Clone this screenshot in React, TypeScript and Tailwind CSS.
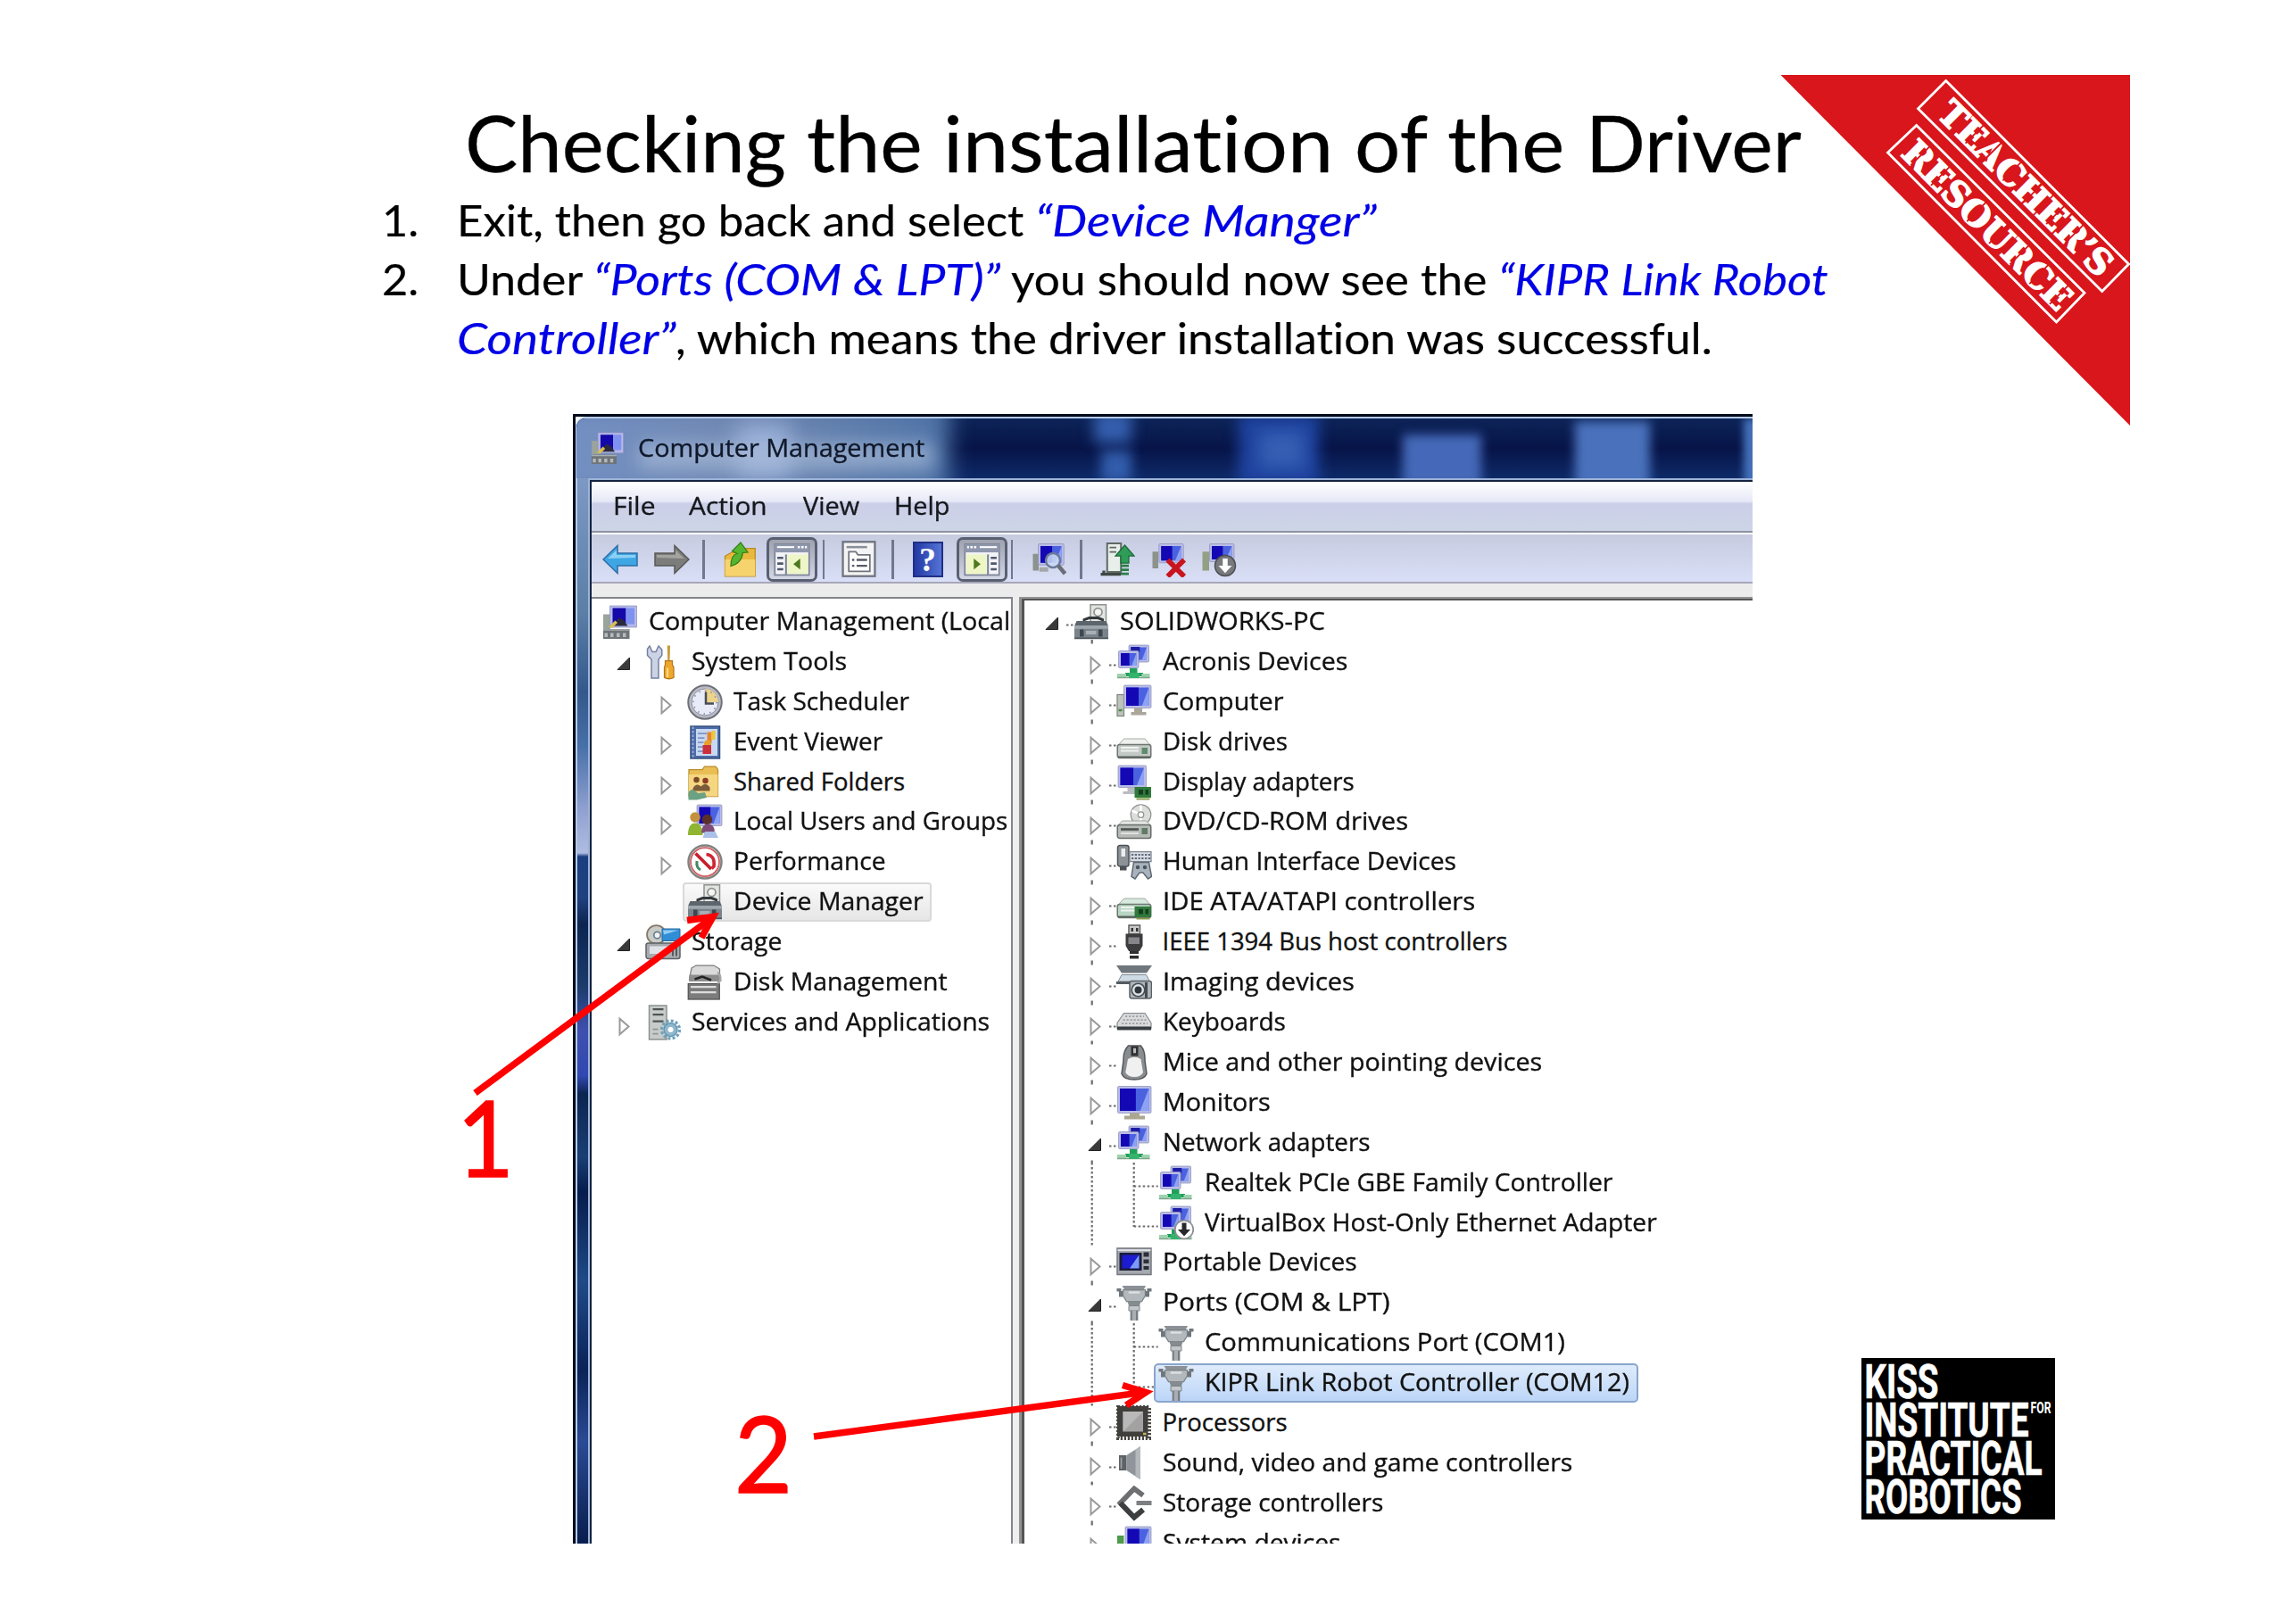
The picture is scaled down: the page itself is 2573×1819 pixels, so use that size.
import React, { useLayoutEffect, useRef, useState } from "react";

/* Text squeezed or stretched horizontally so that it fills an exact advance width. */
function Fit({ w, children, className = "" }: { w: number; children: string; className?: string }) {
  const ref = useRef<HTMLSpanElement>(null);
  const [k, setK] = useState(1);
  useLayoutEffect(() => {
    if (ref.current) setK(w / ref.current.offsetWidth);
  }, [w, children]);
  return (
    <span className="inline-block shrink-0" style={{ width: w }}>
      <span
        ref={ref}
        className={"inline-block origin-left whitespace-pre [font-variant-ligatures:none] " + className}
        style={{ transform: `scaleX(${k})` }}
      >
        {children}
      </span>
    </span>
  );
}

function Mon({ x, y, w, h, dark = "#1408b4" }: { x: number; y: number; w: number; h: number; dark?: string }) {
  return (
    <g>
      <rect x={x} y={y} width={w} height={h} rx={0.5} fill="#b9bce6" stroke="#8f93b8" strokeWidth={0.3} />
      <rect x={x + 1} y={y + 1} width={w - 2} height={h - 2} fill="#4b62e0" />
      <path d={`M${x + 1} ${y + 1}h${(w - 2) * 0.55}v${h - 2}h-${(w - 2) * 0.55}z`} fill={dark} />
      <path d={`M${x + w - 1} ${y + 1}v${h - 2}h-${(w - 2) * 0.3}z`} fill="#8ea2f4" />
    </g>
  );
}

function Port() {
  return (
    <g>
      <path d="M2.6 0.4h10.6l-1 2H3.8z" fill="#8b9196" />
      <path d="M3 2.2h10v2.6l-1.6 2.6H4.6L3 4.8z" fill="#b3b8bc" stroke="#7d8488" strokeWidth=".5" />
      <path d="M0.2 1.6h2v1.2h.8v2.6H1.2V3H.2zM15.8 1.6h-2v1.2H13v2.6h1.8V3h1z" fill="#70777c" />
      <path d="M5 7.4h6l-.6 2H5.6z" fill="#858c90" />
      <path d="M5.6 9.4h4.8v2.2H5.6z" fill="#c3c7ca" stroke="#7d8488" strokeWidth=".4" />
      <path d="M6.3 11.6h3.4V16H6.3z" fill="#a9aeb2" />
      <path d="M6.3 11.6h.8V16h-.8zM8.8 11.6h.9V16h-.9z" fill="#767d82" />
      <path d="M5.5 3.4h5" stroke="#dfe2e4" strokeWidth=".9" />
    </g>
  );
}

function Net() {
  return (
    <g>
      <Mon x={5.6} y={0.4} w={9} h={7.6} dark="#3d4dc0" />
      <rect x={6.5} y={1.2} width={4} height={2.4} fill="#1d1ca6" />
      <Mon x={1} y={3} w={9} h={7.6} />
      <path d="M6 10.8h3.4v2H12v1.6H4v-1.6h2z" fill="#21a05a" />
      <path d="M0.4 13.2h4v1.8h-4zM11.4 13.2h3.6v1.8h-3.6z" fill="#9ed3ae" />
      <path d="M.4 15h14.6" stroke="#7fa58c" strokeWidth=".6" />
      <rect x={5.6} y={12.8} width={4.6} height={2.4} fill="#35b36c" />
    </g>
  );
}

function Mgmt() {
  return (
    <g>
      <path d="M0.4 4.6h3.2v6.6H.4z" fill="#9aa39c" />
      <path d="M3.4 0.8h12v9.6h-12z" fill="#b4b8ea" stroke="#8f94bc" strokeWidth=".3" />
      <path d="M4.6 1.8h6v7.2h-6z" fill="#1408a8" />
      <path d="M10.6 1.8h3.8v7.2h-3.8z" fill="#7f92f0" />
      <path d="M4 9.8l3.4-3.6 2 .9 2 2.7z" fill="#2b2a3c" />
      <path d="M2.8 10.2l3-2.8 1 1-2.4 2.4z" fill="#d9bd55" />
      <path d="M0.4 11.2h11.8v4.4H.4z" fill="#6e7478" />
      <path d="M1 13h1.4v1.8H1zM3.6 13H5v1.8H3.6zM6.4 13h1.4v1.8H6.4zM9.2 13h1.4v1.8H9.2z" fill="#b5babd" />
      <path d="M.4 11.6h11.8" stroke="#a9aeb2" strokeWidth=".6" />
    </g>
  );
}

function DevMgr() {
  return (
    <g>
      <rect x={7.6} y={0.3} width={7} height={9} fill="#e2e5e2" stroke="#8d938e" strokeWidth=".6" />
      <circle cx={11} cy={3.6} r={1.8} fill="#f4f5f4" stroke="#8d938e" strokeWidth=".7" />
      <path d="M4.800 8V7L7 6.200h4l2 .8V8" fill="none" stroke="#33383c" strokeWidth="1.200" />
      <path d="M1.4 7.6h13.2l1 2.2H.4z" fill="#5d656c" />
      <path d="M.4 9.6h15.2v6H.4z" fill="#7a838b" />
      <path d="M.4 9.6h15.2v1.5H.4z" fill="#9ea6ad" />
      <path d="M2.8 11.4h1.8v3.2H2.8zM11.2 11.4H13v3.2h-1.8z" fill="#3f474e" />
      <path d="M5.6 12h4.6v1.6H5.6z" fill="#a8b0b6" />
      <path d="M.4 15.3h15.2" stroke="#4c5359" strokeWidth=".7" />
    </g>
  );
}

function Drive({ green = false }: { green?: boolean }) {
  return (
    <g>
      <path d="M3.4 6.4h9.4l2.6 3H.8z" fill={green ? "#d6ebdd" : "#eef0ee"} stroke="#a5aaa6" strokeWidth=".4" />
      <rect x={0.5} y={9} width={15} height={6} rx={1} fill={green ? "#b7d6c2" : "#c3c9c5"} stroke="#6f7672" strokeWidth=".6" />
      <path d="M2 10.4h8M2 11.8h8" stroke="#eff2f0" strokeWidth=".8" />
      <rect x={11.4} y={10.4} width={2.6} height={2.8} fill="#5f8a6c" />
      <path d="M.8 14.6h14.4" stroke="#5c625e" strokeWidth=".8" />
    </g>
  );
}

function Chip() {
  return (
    <g>
      <rect x={8.2} y={10} width={7.4} height={4.8} fill="#2f7a3c" />
      <path d="M10 11.2h2v2.2h-2zM13 11.2h1.4v2.2H13z" fill="#163d1e" />
      <path d="M9 15.4h6" stroke="#8a9a4c" strokeWidth=".8" />
    </g>
  );
}

const icons: Record<string, React.ReactNode> = {
  mgmt: <Mgmt />,
  devmgr: <DevMgr />,
  net: <Net />,
  port: <Port />,
  disk: <Drive />,
  tools: (
    <g>
      <path d="M2 .8L3.2 3.4h1.6L6 .8l1.5 1.6v2.6L6 6.8V15.2H2.8V6.8L1 5V2.2z" fill="#ccd3e4" stroke="#7680a0" strokeWidth=".6" />
      <path d="M9.9 .6h1.3l-.2 6.8h-.9z" fill="#c79b3a" />
      <path d="M9 7.4h3.2v1.8l.6 1.2V15q-2.1 1-4.2 0v-4.6l.4-1.2z" fill="#efa62c" stroke="#b4761a" strokeWidth=".5" />
      <path d="M10 10.6v4.2" stroke="#ffd987" strokeWidth=".9" />
    </g>
  ),
  clock: (
    <g>
      <circle cx={8} cy={8} r={7.5} fill="#b9bcc6" stroke="#6e7078" strokeWidth=".8" />
      <circle cx={8} cy={8} r={6} fill="#e8ecf8" stroke="#8b8e9b" strokeWidth=".4" />
      <path d="M8 8V2A6 6 0 0 1 14 8z" fill="#ecd48c" />
      <path d="M8.4 3.4v5.2H12" fill="none" stroke="#4a4c54" strokeWidth="1" />
      <circle cx={8} cy={8} r={5.2} fill="none" stroke="#8c93b0" strokeWidth=".7" strokeDasharray=".6 2.1" />
    </g>
  ),
  event: (
    <g>
      <rect x={1.6} y={0.8} width={13} height={14.4} fill="#4d6ca8" stroke="#36507e" strokeWidth=".6" />
      <rect x={4} y={2} width={9.6} height={12} fill="#c9d8f2" />
      <path d="M2.6 1v14" stroke="#9fb2d8" strokeWidth=".7" strokeDasharray="1 .8" />
      <path d="M4.8 4h4M4.8 6h3M4.8 8h2.6M4.8 10h2.6M4.8 12h3" stroke="#7f95c4" strokeWidth=".7" />
      <rect x={9} y={3.4} width={2} height={5} fill="#e8842c" />
      <rect x={11} y={2.8} width={1.6} height={4} fill="#e8c833" />
      <circle cx={9.2} cy={8.6} r={1.6} fill="#e8a02c" />
      <rect x={7} y={9.2} width={3.8} height={4} fill="#cc2f3c" />
    </g>
  ),
  shared: (
    <g>
      <path d="M.8 2.2h6l1-1.4h5l1 1.4v12H.8z" fill="#e9bf55" stroke="#b98c2c" strokeWidth=".5" />
      <path d="M.8 4.4h13v9.8H.8z" fill="#f5d681" />
      <circle cx={4.2} cy={6.800} r={1.3} fill="#7a4a26" />
      <circle cx={8.2} cy={7.200} r={1.3} fill="#8c3b26" />
      <path d="M2.6 10.6q1.6-2.8 3.6-.8 2-2.4 4 .4v1.6H2.6z" fill="#7a5c3a" />
      <path d="M.6 13.4q0-2.2 2-2.2l2.4 1.6 3-.4.8 2.4-4.4 1H.6z" fill="#6ba283" />
    </g>
  ),
  users: (
    <g>
      <Mon x={4.4} y={0.4} w={11.2} h={9.4} />
      <circle cx={3.6} cy={6} r={2.3} fill="#c4913c" />
      <path d="M.4 14q0-5.4 3.2-5.4T7 14z" fill="#8fb533" />
      <circle cx={9} cy={7} r={2.3} fill="#5b2f2a" />
      <path d="M6.4 13q0-4 3-4t3 4z" fill="#7e4c78" />
      <path d="M8 12.4h4.6l1.4 2.8H7z" fill="#a9c0e8" />
    </g>
  ),
  perf: (
    <g>
      <circle cx={8} cy={8} r={7.4} fill="#f1f1ee" stroke="#7f8480" strokeWidth="1" />
      <circle cx={8} cy={8} r={6.4} fill="#fff" stroke="#d05b60" strokeWidth=".7" />
      <path d="M3.8 4.2l7 7" stroke="#c71f2c" strokeWidth="1.5" />
      <path d="M8.6 4.6q4 .4 3.4 5.4l-1 1" fill="none" stroke="#cf2835" strokeWidth="1.5" />
      <path d="M4.4 7.6q-.4 3 1.6 4" fill="none" stroke="#3f8a62" strokeWidth="1.2" />
    </g>
  ),
  storage: (
    <g>
      <circle cx={5} cy={4.6} r={4.2} fill="#c8ccc6" stroke="#85796b" strokeWidth=".7" />
      <circle cx={5.4} cy={4.8} r={1.5} fill="#f3f3f3" stroke="#6b7f95" strokeWidth=".7" />
      <path d="M7.6 2h8v5.4h-8z" fill="#2f8ed6" stroke="#276a9f" strokeWidth=".4" />
      <path d="M8 2.6h7l-6.6 2z" fill="#90cbf2" />
      <rect x={0.4} y={8.4} width={15.2} height={7} rx={1} fill="#a7abb0" stroke="#5c6166" strokeWidth=".6" />
      <path d="M2 9.8h8v3.4H2z" fill="#dfe2e6" />
      <path d="M12.4 9.6v4.6M14 9.6v4.6" stroke="#4b4f54" strokeWidth=".7" />
    </g>
  ),
  diskmgmt: (
    <g>
      <path d="M2 1.6L4 .4h8l2.6 1.6v4.6H1z" fill="#dadada" stroke="#7b7b7b" strokeWidth=".5" />
      <path d="M1 4.6h14l.4 3H.8z" fill="#8d8d8d" />
      <path d="M3.4 6.6l3.4-1.2 4 1.6" fill="none" stroke="#222" strokeWidth="1" />
      <rect x={0.5} y={8.6} width={14} height={7} fill="#7c7c7c" stroke="#525252" strokeWidth=".5" />
      <path d="M1.6 10h11.4M1.6 12.4h11.4" stroke="#dcdcdc" strokeWidth=".9" />
      <path d="M13.6 3.6a3 3 0 0 1 0 5" fill="none" stroke="#a7a7a7" strokeWidth=".9" />
    </g>
  ),
  services: (
    <g>
      <rect x={1.8} y={0.4} width={7.8} height={15.2} fill="#c7ccca" stroke="#8c928f" strokeWidth=".6" />
      <path d="M3.4 2h4.8M3.4 4.4h4.8M3.4 7.4h4.8" stroke="#4f5553" strokeWidth=".9" />
      <path d="M3.4 11h2.4M3.4 13h2.4" stroke="#8e9491" strokeWidth=".7" />
      <circle cx={11.4} cy={11.2} r={4} fill="none" stroke="#6fa0bb" strokeWidth="1.3" strokeDasharray="1.2 .89" />
      <circle cx={11.4} cy={11.2} r={3} fill="#8fb7cd" stroke="#5d90ac" strokeWidth=".5" />
      <circle cx={11.4} cy={11.2} r={1.2} fill="#fff" />
    </g>
  ),
  computer: (
    <g>
      <rect x={0.4} y={4.6} width={3} height={9.6} fill="#bcc4bc" stroke="#7e867e" strokeWidth=".5" />
      <path d="M1 11.6h1.6" stroke="#4c8a4c" strokeWidth="1" />
      <Mon x={3.4} y={0.4} w={12.2} h={10.2} />
      <path d="M8 10.6h3.6v1.8h1.8v1.4H6.6v-1.4H8z" fill="#aaa69c" />
    </g>
  ),
  display: (
    <g>
      <Mon x={0.8} y={0.4} w={12.6} h={9.8} />
      <path d="M5 10.4h4v1.6h2v1.2H3V12h2z" fill="#b9bcc0" />
      <Chip />
    </g>
  ),
  dvd: (
    <g>
      <circle cx={11} cy={4.8} r={4.5} fill="#dcdedb" stroke="#8f928e" strokeWidth=".5" />
      <path d="M11 .6v3M11 6v3M7 3l3 1.4" stroke="#fff" strokeWidth="1" />
      <circle cx={11} cy={4.8} r={1.3} fill="#fff" stroke="#8f928e" strokeWidth=".5" />
      <path d="M2.6 7.6h10.8l2 2H.8z" fill="#e4e6e4" stroke="#a0a3a0" strokeWidth=".4" />
      <rect x={0.5} y={9.4} width={15} height={6} rx={1} fill="#b5bab6" stroke="#686d69" strokeWidth=".6" />
      <path d="M2 11.4h8" stroke="#4c504d" strokeWidth="1" />
      <path d="M2 13.2h8" stroke="#e6e8e6" strokeWidth=".7" />
      <rect x={11.4} y={10.8} width={2.6} height={2.8} fill="#5f7a66" />
    </g>
  ),
  hid: (
    <g>
      <rect x={0.6} y={0.6} width={5} height={9.4} rx={1} fill="#8c9296" stroke="#4d5256" strokeWidth=".6" />
      <rect x={2.2} y={2} width={1.8} height={3.6} fill="#eceeef" />
      <path d="M1.6 10h3v1.8h-3z" fill="#4d5256" />
      <path d="M6 3.4h9.6v4.4H6z" fill="#d7dbe2" stroke="#7d8590" strokeWidth=".5" />
      <path d="M6.8 4.8h8.4M6.8 6.4h8.4" stroke="#5f6a7c" strokeWidth=".8" strokeDasharray=".9 .6" />
      <path d="M7.8 8.2h6.8l1.2 6.4-1.6 1-2.2-2.8h-1.6l-2 2.8L6.8 14.6z" fill="#a9b3bd" stroke="#5f6972" strokeWidth=".6" />
      <circle cx={9.6} cy={10.4} r={0.9} fill="#4c5660" />
      <circle cx={12.8} cy={10.4} r={0.9} fill="#4c5660" />
    </g>
  ),
  ide: (
    <g>
      <Drive green />
      <Chip />
    </g>
  ),
  ieee: (
    <g>
      <path d="M5.6 .4h5v4h-5z" fill="#c9c9c9" stroke="#5f5f5f" strokeWidth=".6" />
      <path d="M6.6 1.6h1v1.6h-1zM8.8 1.6h1v1.6h-1z" fill="#333" />
      <path d="M4.2 4.2h7.6v5.4l-1.4 2.4H5.6L4.2 9.6z" fill="#3c3c3e" />
      <path d="M5.4 5.8h5v3h-5z" fill="#86868a" />
      <path d="M6 12h4v1.2H6zM6 14h4v1.4H6z" fill="#2d2d2e" />
    </g>
  ),
  imaging: (
    <g>
      <path d="M0 .4h16l-2.4 3.4H2.4z" fill="#6f777d" />
      <path d="M2.4 4.6h11l1.6 3H.8z" fill="#cfdbe4" stroke="#7f8990" strokeWidth=".4" />
      <path d="M0 8.2h10" stroke="#555c62" strokeWidth="1.2" />
      <rect x={6} y={7.4} width={9.8} height={7.8} rx={1} fill="#adb5bb" stroke="#596066" strokeWidth=".6" />
      <circle cx={9.8} cy={11.4} r={2.9} fill="#dfe3e6" stroke="#454c52" strokeWidth=".6" />
      <circle cx={9.8} cy={11.4} r={1.6} fill="#30373d" />
      <path d="M13.4 8v7" stroke="#454c52" strokeWidth="1.2" />
    </g>
  ),
  keyboard: (
    <g>
      <path d="M3.4 3.8h9.4l2.8 4.4v2.4H.4V8.2z" fill="#d9dbdc" stroke="#8c9092" strokeWidth=".5" />
      <path d="M4 5.2h8.4M3 6.8h10.4M2.4 8.4h11.6" stroke="#9da1a4" strokeWidth=".7" strokeDasharray=".9 .7" />
      <path d="M.4 9.8h15.2v1.6H.4z" fill="#3b3e40" />
    </g>
  ),
  mouse: (
    <g>
      <path d="M5.4 .4h5.600q2 2.4 1.8 6.6l.8 6q-1 2.6-5.600 2.6t-5.600-2.6l.8-6Q3 2.800 5.4 .4z" fill="#8a8d90" stroke="#55585b" strokeWidth=".6" />
      <path d="M5.200 6.400Q8.200 4.600 11 6.400l1 6q-1 2-3.900 2t-4-2z" fill="#f0f0f0" />
      <path d="M6.600 .6h3.200v4.400H6.600z" fill="#2f3133" />
      <path d="M7.600 1.500h1.200v2.200H7.600z" fill="#b9bbbd" />
    </g>
  ),
  monitor: (
    <g>
      <Mon x={0.6} y={0.6} w={15} h={12} />
      <path d="M6 12.600h4.400v1.200h2.400v1.600H3.600v-1.600H6z" fill="#aaa690" />
    </g>
  ),
  netdown: (
    <g>
      <Net />
      <circle cx={11.600} cy={10.800} r={4.100} fill="#fff" stroke="#8d8f92" strokeWidth=".7" />
      <path d="M10.600 7.800h2v3h1.800l-2.800 3-2.800-3h1.800z" fill="#26282a" />
    </g>
  ),
  portable: (
    <g>
      <rect x={0.400} y={1.600} width={15.200} height={11.800} fill="#a5a9b0" stroke="#75797f" strokeWidth=".6" />
      <rect x={1.400} y={3.600} width={10} height={8} fill="#1a1d3c" />
      <rect x={2.600} y={4.600} width={7.600} height={6} fill="#1c1cd0" />
      <path d="M10.200 4.600v6H6z" fill="#7d9cf8" />
      <path d="M12.200 3.400h2.400v2h-2.400zM12.200 6.600h2.400v1.800h-2.400zM12.200 9.600h2.400v1.600h-2.400z" fill="#2c2f36" />
      <path d="M.6 2.400h14.800" stroke="#e3e5e8" strokeWidth=".7" />
    </g>
  ),
  cpu: (
    <g>
      <rect x={0.800} y={0.800} width={14} height={14} fill="none" stroke="#4a4844" strokeWidth="1.600" strokeDasharray=".9 .7" />
      <rect x={0.400} y={0.400} width={13.800} height={13.600} fill="#403f3c" />
      <rect x={3} y={2.800} width={9} height={9} fill="#a2a2a2" />
      <path d="M3 2.800h9L3 11.800z" fill="#b9b9b9" />
      <path d="M12 12.800h1.400" stroke="#c6b45a" strokeWidth="1" />
    </g>
  ),
  sound: (
    <g>
      <path d="M1.200 4.400h3.400v6.800H1.200z" fill="#5d6266" />
      <path d="M4.600 4.400L10.800 .4v14.800L4.600 11.200z" fill="#8f959a" />
      <path d="M8.600 2v12l2.200 1.200V.4z" fill="#b3b8bb" />
      <path d="M2.200 5.400v5" stroke="#9aa0a5" strokeWidth=".7" />
    </g>
  ),
  storctl: (
    <g>
      <path d="M12 4.400L8 1.400 1.800 7.800 8 14.200 12 10.800" fill="none" stroke="#6d6f70" strokeWidth="2.300" />
      <path d="M1.800 7.800L8 14.200 12 10.800" fill="none" stroke="#3c3e3f" strokeWidth="2.300" />
      <path d="M9 7.800h6.800" stroke="#7d7f80" strokeWidth="2" />
    </g>
  ),
  system: (
    <g>
      <rect x={0.400} y={4.400} width={3} height={9.600} fill="#4f9a4c" />
      <Mon x={4} y={0.400} w={11.600} h={10} />
    </g>
  ),
};

function Icon({ name, className = "size-[40px]" }: { name: string; className?: string }) {
  return (
    <svg viewBox="0 0 16 16" className={"shrink-0 " + className}>
      {icons[name]}
    </svg>
  );
}

type Arrow = "open" | "closed" | "none";
type Item = { t: string; w: number; l: number; a: Arrow; i: string; sel?: "gray" | "blue"; last?: boolean };

function Expander({ a }: { a: Arrow }) {
  return (
    <svg viewBox="0 0 32 45" className="h-[45px] w-[32px] shrink-0">
      {a === "open" && <path d="M14.500 18V31.500H1z" fill="#3a3a3a" stroke="#222" strokeWidth="1" />}
      {a === "closed" && <path d="M3.500 17.800v17.500l10-8.700z" fill="#fff" stroke="#9a9a9a" strokeWidth="2" />}
    </svg>
  );
}

function Connectors({ item }: { item: Item }) {
  const dash = { stroke: "#6b6b6b", strokeWidth: 2.2, strokeDasharray: "2.5 2.5", fill: "none" };
  return (
    <svg viewBox="0 0 160 45" className="absolute left-0 top-0 h-[45px] w-[160px]">
      {item.l === 0 && <path d="M47 25.500h8M75.700 42v3" {...dash} />}
      {item.l === 1 && <path d="M95 26.500h8M75.700 0v3M75.700 42.500v2.500" {...dash} />}
      {item.l === 2 && <path d="M75.700 0v45M122.700 26.500h27" {...dash} />}
      {item.l === 2 && <path d={item.last ? "M122.700 0v27" : "M122.700 0v45"} {...dash} />}
    </svg>
  );
}

function Row({ item, base, dots = false }: { item: Item; base: number; dots?: boolean }) {
  const iconX = base + item.l * 47.5;
  const slot = iconX >= 32;
  return (
    <div className="relative flex h-[44.91px] items-center" style={{ paddingLeft: slot ? iconX - 32 : iconX }}>
      {dots && <Connectors item={item} />}
      {slot && (
        <span className="relative flex">
          <Expander a={item.a} />
        </span>
      )}
      <span className="relative flex items-center">
        {item.sel === "gray" && (
          <span className="absolute -left-[5px] top-[-2px] h-[44px] w-[279px] rounded-[4px] border-2 border-[#d9d9d9] bg-linear-to-b from-[#fafafa] to-[#e6e6e6]" />
        )}
        {item.sel === "blue" && (
          <span className="absolute -left-[5px] top-[-2px] h-[44px] w-[543px] rounded-[5px] border-[2.5px] border-[#8aa5cc] bg-linear-to-b from-[#dfebfb] to-[#bcd6f8]" />
        )}
        <Icon name={item.i} className="relative size-[40px]" />
        <span className="relative -top-[1px] ml-[12px] font-['Open_Sans',sans-serif] text-[27.5px] leading-[40px] text-[#111] [-webkit-text-stroke:0.35px]">
          <Fit w={item.w - 2}>{item.t}</Fit>
        </span>
      </span>
    </div>
  );
}

const left: Item[] = [
  { t: "Computer Management (Local", w: 407, l: 0, a: "none", i: "mgmt" },
  { t: "System Tools", w: 176, l: 1, a: "open", i: "tools" },
  { t: "Task Scheduler", w: 199, l: 2, a: "closed", i: "clock" },
  { t: "Event Viewer", w: 169, l: 2, a: "closed", i: "event" },
  { t: "Shared Folders", w: 194, l: 2, a: "closed", i: "shared" },
  { t: "Local Users and Groups", w: 309, l: 2, a: "closed", i: "users" },
  { t: "Performance", w: 172, l: 2, a: "closed", i: "perf" },
  { t: "Device Manager", w: 215, l: 2, a: "none", i: "devmgr", sel: "gray" },
  { t: "Storage", w: 103, l: 1, a: "open", i: "storage" },
  { t: "Disk Management", w: 242, l: 2, a: "none", i: "diskmgmt" },
  { t: "Services and Applications", w: 336, l: 1, a: "closed", i: "services" },
];

const right: Item[] = [
  { t: "SOLIDWORKS-PC", w: 232, l: 0, a: "open", i: "devmgr" },
  { t: "Acronis Devices", w: 209, l: 1, a: "closed", i: "net" },
  { t: "Computer", w: 138, l: 1, a: "closed", i: "computer" },
  { t: "Disk drives", w: 142, l: 1, a: "closed", i: "disk" },
  { t: "Display adapters", w: 217, l: 1, a: "closed", i: "display" },
  { t: "DVD/CD-ROM drives", w: 277, l: 1, a: "closed", i: "dvd" },
  { t: "Human Interface Devices", w: 331, l: 1, a: "closed", i: "hid" },
  { t: "IDE ATA/ATAPI controllers", w: 352, l: 1, a: "closed", i: "ide" },
  { t: "IEEE 1394 Bus host controllers", w: 389, l: 1, a: "closed", i: "ieee" },
  { t: "Imaging devices", w: 217, l: 1, a: "closed", i: "imaging" },
  { t: "Keyboards", w: 140, l: 1, a: "closed", i: "keyboard" },
  { t: "Mice and other pointing devices", w: 427, l: 1, a: "closed", i: "mouse" },
  { t: "Monitors", w: 123, l: 1, a: "closed", i: "monitor" },
  { t: "Network adapters", w: 234, l: 1, a: "open", i: "net" },
  { t: "Realtek PCIe GBE Family Controller", w: 459, l: 2, a: "none", i: "net" },
  { t: "VirtualBox Host-Only Ethernet Adapter", w: 509, l: 2, a: "none", i: "netdown", last: true },
  { t: "Portable Devices", w: 220, l: 1, a: "closed", i: "portable" },
  { t: "Ports (COM & LPT)", w: 256, l: 1, a: "open", i: "port" },
  { t: "Communications Port (COM1)", w: 406, l: 2, a: "none", i: "port" },
  { t: "KIPR Link Robot Controller (COM12)", w: 478, l: 2, a: "none", i: "port", sel: "blue", last: true },
  { t: "Processors", w: 142, l: 1, a: "closed", i: "cpu" },
  { t: "Sound, video and game controllers", w: 461, l: 1, a: "closed", i: "sound" },
  { t: "Storage controllers", w: 249, l: 1, a: "closed", i: "storctl" },
  { t: "System devices", w: 201, l: 1, a: "closed", i: "system" },
];

function Sep({ className }: { className: string }) {
  return <span className={"h-[44px] w-[2.5px] shrink-0 bg-[#70788e] " + className} />;
}

function PaneButton({ flip, className }: { flip?: boolean; className: string }) {
  return (
    <span
      className={
        "flex h-[50px] w-[57px] shrink-0 items-center justify-center rounded-[7px] border-[3px] border-[#596072] bg-linear-to-b from-[#9fa3b0] to-[#d3d7e6] " +
        className
      }
    >
      <svg viewBox="0 0 16 16" className={flip ? "size-[41px] -scale-x-100" : "size-[41px]"}>
        <rect x="0.500" y="1.500" width="15" height="13.500" fill="#f3f4f8" stroke="#7e8496" strokeWidth=".7" />
        <rect x="0.500" y="1.500" width="15" height="3.600" fill="#8f97ac" />
        <path d="M1.500 2.800h7.500" stroke="#fff" strokeWidth=".8" />
        <path d="M10.500 2.800h4" stroke="#fff" strokeWidth="1" strokeDasharray="1 .6" />
        <path d="M5.400 6v9" stroke="#7e8496" strokeWidth=".8" />
        <path d="M1.600 7.500h2.600M1.600 10h2.600M1.600 12.500h2.600" stroke="#4f586e" strokeWidth="1" />
        <rect x="6" y="6" width="9" height="8.500" fill="#eef6c8" />
        <path d="M11.600 7.800v4.800L8.600 10.200z" fill="#4d7a1e" />
      </svg>
    </span>
  );
}

function Toolbar() {
  return (
    <div className="flex h-[53px] shrink-0 items-center bg-linear-to-b from-[#c6cbe0] to-[#d9dff6] pt-[3px]">
      <svg viewBox="0 0 40 34" className="ml-[12px] h-[36px] w-[40px] shrink-0">
        <path d="M1 17L17 1.500V10h22v14H17v8.500z" fill="#3fa6e4" stroke="#2d6ea6" strokeWidth="1.500" />
        <path d="M6 16L16 6.500V12h21v3z" fill="#8bd0f5" />
      </svg>
      <svg viewBox="0 0 40 34" className="ml-[18px] h-[36px] w-[40px] shrink-0">
        <path d="M39 17L23 1.500V10H1v14h22v8.500z" fill="#7c7c7a" stroke="#585856" strokeWidth="1.500" />
        <path d="M34 16L24 6.500V12H3v3z" fill="#a3a3a0" />
      </svg>
      <Sep className="ml-[14px]" />
      <svg viewBox="0 0 16 16" className="ml-[20px] size-[40px] shrink-0">
        <path d="M1 6.500l3-1.700h4L9.500 3h5v12.500H1z" fill="#e9b93e" stroke="#b98a24" strokeWidth=".5" />
        <path d="M1 8h13.500v7.500H1z" fill="#f7d36e" />
        <path d="M3.600 11Q3.600 6 6.400 5.400L4.200 4.200 8 .4l3.200 4.400-2.300.2Q8.600 9.600 3.600 11z" fill="#55b52e" stroke="#327e18" strokeWidth=".5" />
      </svg>
      <PaneButton className="ml-[9px]" />
      <Sep className="ml-[6px]" />
      <svg viewBox="0 0 16 16" className="ml-[18px] size-[41px] shrink-0">
        <rect x="1" y="0.500" width="14" height="15" fill="#f4f4f4" stroke="#6f7480" strokeWidth=".9" />
        <path d="M2.600 2.800h9" stroke="#8a8f9c" strokeWidth="1" />
        <path d="M3.600 4.800h3l1 1.400h5.200v7.200H3.600z" fill="#fff" stroke="#6f7480" strokeWidth=".7" />
        <path d="M5 8.400h1M7 8.400h4.600M5 11h1M7 11h4.600" stroke="#555b68" strokeWidth=".9" />
      </svg>
      <Sep className="ml-[16px]" />
      <span className="ml-[21px] flex h-[40px] w-[34px] shrink-0 items-center justify-center border-2 border-[#1f2f86] bg-linear-to-r from-[#2438a4] to-[#5573d6] font-['Liberation_Serif',serif] text-[38px] leading-[38px] font-bold text-white">
        ?
      </span>
      <PaneButton flip className="ml-[15px]" />
      <Sep className="ml-[4px]" />
      <svg viewBox="0 0 16 16" className="ml-[21px] size-[40px] shrink-0">
        <path d="M.6 5.500h2.600v7.500H.6z" fill="#8b938c" />
        <Mon x={3} y={1} w={11.5} h={9.5} />
        <circle cx="9.600" cy="8.400" r="3.200" fill="#cfdff6" fillOpacity=".85" stroke="#6c7a98" strokeWidth="1" />
        <path d="M12 10.800l3 3.600" stroke="#6b6e78" strokeWidth="1.800" />
        <path d="M3.500 11.500h4v2h-4z" fill="#a3a7a9" />
      </svg>
      <Sep className="ml-[14px]" />
      <svg viewBox="0 0 16 16" className="ml-[19px] size-[40px] shrink-0">
        <path d="M3.500 .8h6.200v12.800H3.500z" fill="#e8eeea" stroke="#5f6a63" strokeWidth=".8" />
        <path d="M4.600 2.600h3M4.600 4.600h3" stroke="#5f6a63" strokeWidth=".7" />
        <path d="M.6 14.600h9M2 13v1.800" stroke="#3f4843" strokeWidth="1.300" />
        <path d="M11.400 1.600l4.200 4.800h-2.400v3.200H9.600V6.400H7.200z" fill="#2f9d57" stroke="#1c6a38" strokeWidth=".5" />
        <path d="M9.600 10.800h3.600M9.600 12.600h3.600M9.600 14.400h3.600" stroke="#2c7d49" strokeWidth="1.100" />
      </svg>
      <svg viewBox="0 0 16 16" className="ml-[18px] size-[40px] shrink-0">
        <path d="M.6 4.500h2.600v7.500H.6z" fill="#8b938c" />
        <Mon x={3.5} y={1} w={11} h={8.5} />
        <path d="M7.400 8.200l7.400 7.400M14.800 8.200l-7.400 7.400" stroke="#c8141e" strokeWidth="2.300" />
      </svg>
      <svg viewBox="0 0 16 16" className="ml-[16px] size-[40px] shrink-0">
        <path d="M.6 4.500h3v8.500h-3z" fill="#93a084" />
        <Mon x={3.8} y={1} w={11} h={8} />
        <circle cx="10.800" cy="10.800" r="4.600" fill="#77797c" stroke="#4c4e50" strokeWidth=".6" />
        <path d="M9.700 7.600h2.200v3.200h1.900l-3 3.300-3-3.300h1.900z" fill="#fff" />
      </svg>
    </div>
  );
}

function TitleBar() {
  return (
    <div className="relative h-[66.5px] overflow-hidden bg-[#07194f]">
      <div className="absolute inset-0 bg-linear-to-b from-[#0d2458] via-[#071448] to-[#0e2a68]" />
      <div className="absolute -top-[20px] -left-[30px] h-[110px] w-[448px] bg-linear-to-r from-[#7390c4] via-[#7189b2] to-[#4f74a8] blur-[12px]" />
      <div className="absolute top-[5px] left-[180px] h-[62px] w-[60px] bg-[#a9bfe8] opacity-70 blur-[12px]" />
      <div className="absolute top-[28px] left-[70px] h-[28px] w-[330px] bg-[#a9bcd8] opacity-70 blur-[10px]" />
      <div className="absolute -top-[8px] left-[580px] h-[36px] w-[42px] bg-[#3f6fc4] opacity-80 blur-[8px]" />
      <div className="absolute top-[36px] left-[588px] h-[36px] w-[34px] bg-[#3c6cc0] opacity-80 blur-[7px]" />
      <div className="absolute -top-[5px] left-[742px] h-[80px] w-[90px] bg-[#2247a8] opacity-90 blur-[8px]" />
      <div className="absolute top-[15px] left-[765px] h-[40px] w-[50px] bg-[#3f6cbc] opacity-70 blur-[9px]" />
      <div className="absolute top-[18px] left-[926px] h-[60px] w-[88px] bg-[#4569b8] blur-[6px]" />
      <div className="absolute top-[3px] left-[1119px] h-[75px] w-[84px] bg-[#4a72bc] blur-[6px]" />
      <div className="absolute top-0 left-[1308px] h-[75px] w-[40px] bg-[#4471ba] blur-[4px]" />
      <div className="relative flex h-[66px] items-center pl-[16px]">
        <Icon name="mgmt" className="size-[38px]" />
        <span className="relative -top-[1px] ml-[15px] font-['Open_Sans',sans-serif] text-[28px] leading-[40px] text-[#10182a] [-webkit-text-stroke:0.35px]">
          <Fit w={321}>Computer Management</Fit>
        </span>
      </div>
    </div>
  );
}

function ManagementWindow() {
  return (
    <section className="ml-[642px] flex h-[1266px] w-[1322px] flex-col overflow-hidden border-t-[3px] border-l-[3px] border-[#020a1a]">
      <div className="flex min-h-0 flex-1 flex-col rounded-tl-[12px] border-t-[2.5px] border-l-2 border-[#b5cbe8] bg-[#7f97bd]">
        <div className="-ml-[1px] shrink-0 overflow-hidden rounded-tl-[10px]">
          <TitleBar />
        </div>
        <div className="flex min-h-0 flex-1 bg-[linear-gradient(to_bottom,#7d98c4_0,#5b7fa6_150px,#34588c_240px,#4670a8_300px,#8f9fd0_370px,#b0bce0_420px,#1a3f80_424px,#1f4180_470px,#0c2450_500px,#1c3c6c_570px,#4050b0_620px,#3048b0_670px,#0c2450_690px,#1a3f74_760px,#061c4c_800px,#1f4a88_900px,#0a2258_1000px,#2a4a94_1080px,#0a1f50_1190px)]">
          <div className="w-[12px] shrink-0" />
          <div className="flex min-w-0 flex-1 flex-col border-t-2 border-l-2 border-[#9db4d8]">
            <div className="flex min-h-0 min-w-0 flex-1 flex-col border-t-2 border-l-2 border-[#14233f] bg-[#ececec]">
              <div className="flex h-[55px] shrink-0 items-center bg-[linear-gradient(to_bottom,#ffffff_0,#e6e8f6_40%,#cbcfe7_44%,#cdd5e7_100%)] pl-[24px] font-['Open_Sans',sans-serif] text-[27.5px] text-[#16181e] [-webkit-text-stroke:0.35px]">
                <span className="relative flex">
                  <span className="mr-[37px]"><Fit w={48}>File</Fit></span>
                  <span className="mr-[40px]"><Fit w={88}>Action</Fit></span>
                  <span className="mr-[39px]"><Fit w={63}>View</Fit></span>
                  <Fit w={63}>Help</Fit>
                </span>
              </div>
              <div className="h-[4px] shrink-0 border-t-2 border-[#8d92a4] bg-white" />
              <Toolbar />
              <div className="h-[2px] shrink-0 bg-[#a6a7b8]" />
              <div className="h-[15px] shrink-0 bg-[#ececec]" />
              <div className="flex min-h-0 flex-1">
                <div className="w-[472px] shrink-0 overflow-hidden border-t-2 border-r-2 border-[#83858c] bg-white pt-[4px]">
                  {left.map((it) => (
                    <Row key={it.t} item={it} base={12} />
                  ))}
                </div>
                <div className="w-[7px] shrink-0 bg-[#eeeeee]" />
                <div className="min-w-0 flex-1 border-t-2 border-l-[3px] border-[#929292]">
                  <div className="h-full overflow-hidden border-t-2 border-l-[3px] border-[#555555] bg-white pt-[2px]">
                    {right.map((it) => (
                      <Row key={it.t} item={it} base={55} dots />
                    ))}
                  </div>
                </div>
              </div>
            </div>
          </div>
        </div>
      </div>
    </section>
  );
}

function TeacherBadge() {
  return (
    <svg viewBox="1995 84 392 393" className="absolute top-[84px] left-[1995px] h-[393px] w-[392px]">
      <path d="M1995.500 84H2387v393z" fill="#d8161b" />
      <g fill="none" stroke="#fff" strokeWidth="2.800">
        <path d="M2180.700 90.500L2385.500 296 2355.700 326.500 2149.500 121.700z" />
        <path d="M2147.700 140.500L2336 328.300 2304.500 361 2115.500 171z" />
      </g>
      <g fill="#fff" stroke="#fff" strokeWidth="1.600" fontFamily="'DejaVu Serif', serif" fontWeight="700" fontSize="39">
        <text transform="translate(2180.7 89.300) rotate(45)" x="20" y="36.500" textLength="259" lengthAdjust="spacingAndGlyphs">
          TEACHER’S
        </text>
        <text transform="translate(2147.700 139.300) rotate(45)" x="11" y="37.500" textLength="250" lengthAdjust="spacingAndGlyphs">
          RESOURCE
        </text>
      </g>
      <g fill="none" stroke="#d8161b" strokeWidth="1.800">
        <path
          transform="translate(2182.100 90.700) rotate(45)"
          d="M64 6v29M92 6v29M123 6v29M157 6v29M192 6v29M222 6v29"
        />
        <path
          transform="translate(2148.400 140) rotate(45)"
          d="M27 7v30M59 7v30M116 7v30M151 7v30M184 7v30M215 7v30M247 7v30"
        />
      </g>
    </svg>
  );
}

function KissLogo() {
  return (
    <svg viewBox="0 0 217 181" className="absolute top-[1522px] left-[2086px] h-[181px] w-[217px]">
      <rect width="217" height="181" fill="#000" />
      <g fill="#fff" stroke="#fff" strokeWidth=".7" fontFamily="Roboto, sans-serif" fontWeight="700" fontSize="54.500">
        <text x="3.500" y="44.500" textLength="83" lengthAdjust="spacingAndGlyphs">KISS</text>
        <text x="3.500" y="87.500" textLength="184" lengthAdjust="spacingAndGlyphs">INSTITUTE</text>
        <text x="3.500" y="130.500" textLength="199" lengthAdjust="spacingAndGlyphs">PRACTICAL</text>
        <text x="3.500" y="173.500" textLength="176" lengthAdjust="spacingAndGlyphs">ROBOTICS</text>
        <text x="189.500" y="61.500" fontSize="18" strokeWidth="0" textLength="23" lengthAdjust="spacingAndGlyphs">FOR</text>
      </g>
    </svg>
  );
}

function Callouts() {
  return (
    <>
      <svg viewBox="500 1000 820 640" className="absolute top-[1000px] left-[500px] h-[640px] w-[820px]">
        <g fill="none" stroke="#ff0000" strokeWidth="7.500">
          <path d="M532.500 1225L796 1030" />
          <path d="M770 1031.500L799 1027.500 786 1051" />
          <path d="M912 1610L1282 1560.500" />
          <path d="M1258 1552.500L1284 1560.500 1262 1575" />
        </g>
      </svg>
      <span className="absolute top-[1201px] left-[512px] font-['Lato',sans-serif] text-[119px] leading-[144px] text-[#ff0000] [-webkit-text-stroke:1.5px]">
        <Fit w={64}>1</Fit>
      </span>
      <span className="absolute top-[1555px] left-[823px] font-['Lato',sans-serif] text-[119px] leading-[144px] text-[#ff0000] [-webkit-text-stroke:1.5px]">
        <Fit w={65}>2</Fit>
      </span>
    </>
  );
}

const blue = "italic text-[#0000e6]";

export default function App() {
  return (
    <main className="relative h-[1819px] w-[2573px] overflow-hidden bg-white pt-[103px] text-black">
      <h1 className="flex h-[110px] items-center pt-[1px] pl-[521px] font-['Lato',sans-serif] text-[88px] leading-[110px] [-webkit-text-stroke:0.3px]">
        <Fit w={383}>{"Checking "}</Fit>
        <Fit w={153}>{"the "}</Fit>
        <Fit w={461}>{"installation "}</Fit>
        <Fit w={104}>{"of "}</Fit>
        <Fit w={155}>{"the "}</Fit>
        <Fit w={242}>Driver</Fit>
      </h1>
      <ol className="relative top-[1px] mb-[53px] pl-[428px] font-['Lato',sans-serif] text-[48px] leading-[66px] [-webkit-text-stroke:0.2px]">
        <li className="flex h-[66px]">
          <span className="w-[84px]"><Fit w={41}>1.</Fit></span>
          <Fit w={648}>{"Exit, then go back and select "}</Fit>
          <Fit w={383} className={blue}>“Device Manger”</Fit>
        </li>
        <li className="flex h-[66px]">
          <span className="w-[84px]"><Fit w={41}>2.</Fit></span>
          <Fit w={153}>{"Under "}</Fit>
          <Fit w={456} className={blue}>“Ports (COM & LPT)”</Fit>
          <span className="ml-[12px]"><Fit w={546}>{"you should now see the "}</Fit></span>
          <Fit w={370} className={blue}>“KIPR Link Robot</Fit>
        </li>
        <li className="flex h-[66px] pl-[84px]">
          <Fit w={245} className={blue}>Controller”</Fit>
          <Fit w={1162}>, which means the driver installation was successful.</Fit>
        </li>
      </ol>
      <ManagementWindow />
      <TeacherBadge />
      <KissLogo />
      <Callouts />
    </main>
  );
}
